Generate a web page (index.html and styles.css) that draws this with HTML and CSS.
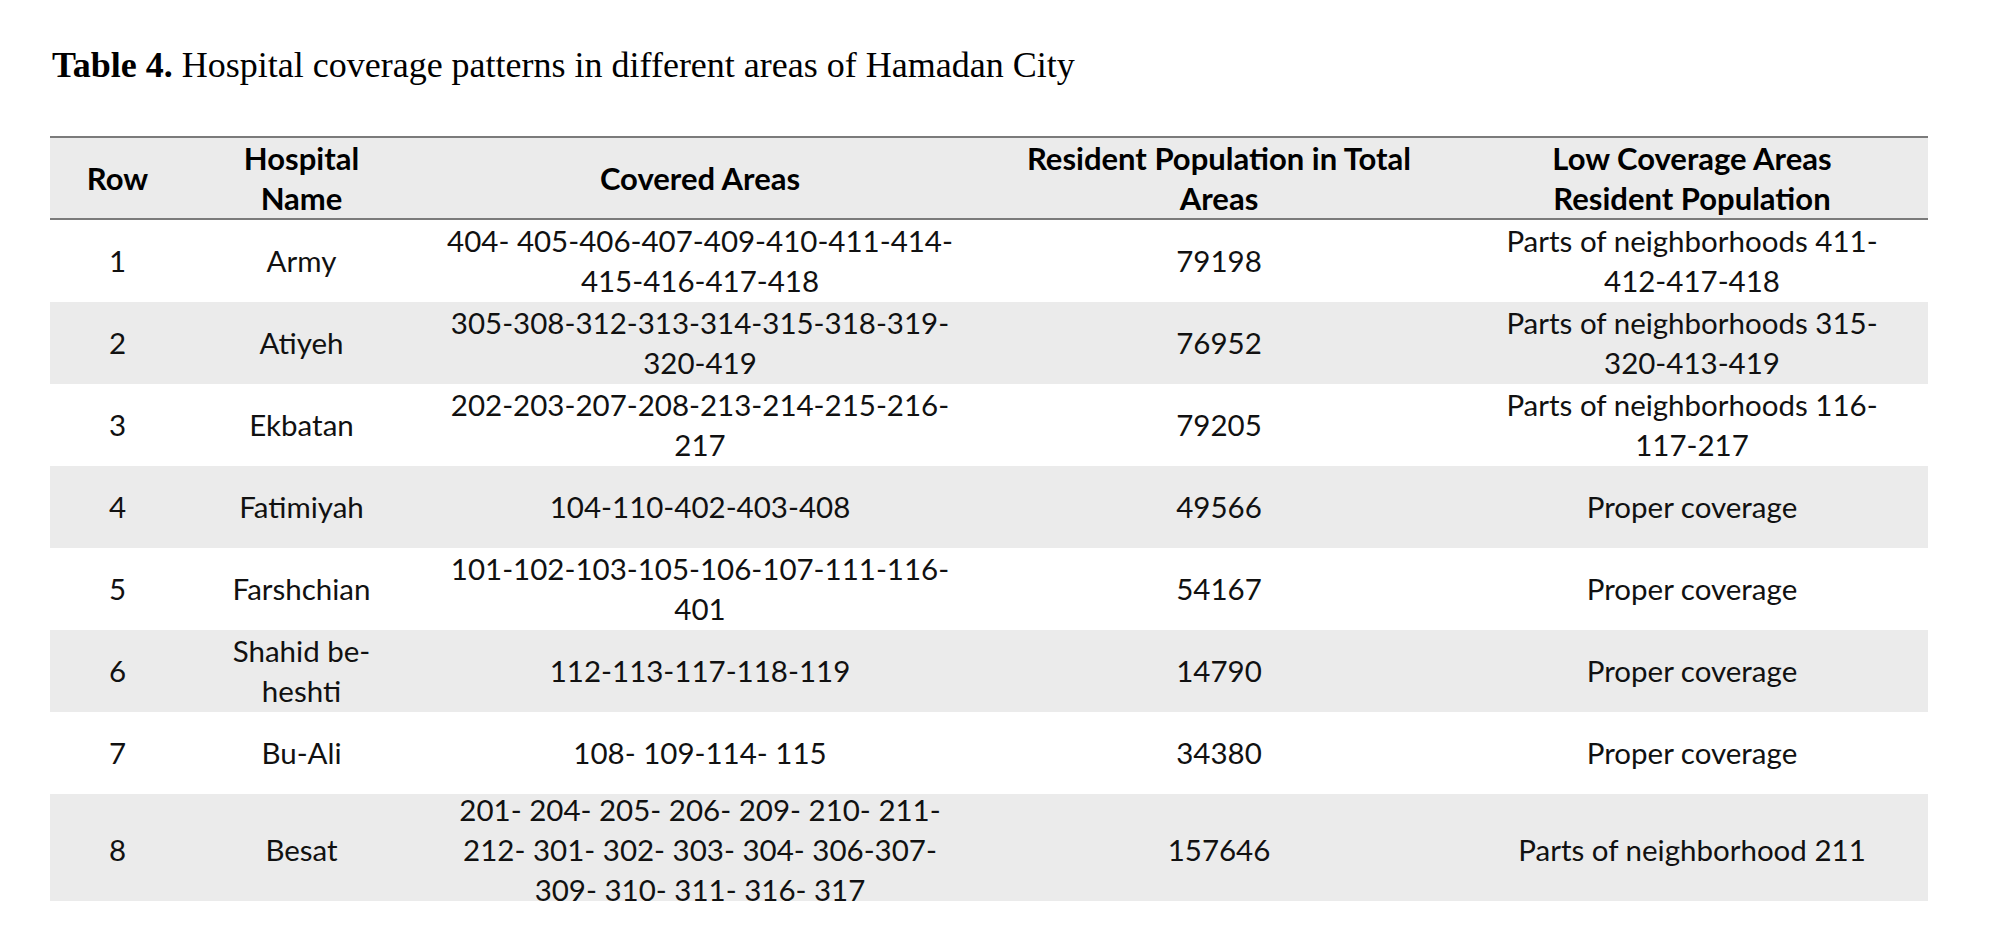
FILE: index.html
```html
<!DOCTYPE html>
<html lang="en">
<head>
<meta charset="utf-8">
<title>Table 4</title>
<link rel="stylesheet" href="styles.css">
</head>
<body>
<p class="caption"><b>Table 4.</b> Hospital coverage patterns in different areas of Hamadan City</p>
<div class="table">
  <div class="row head">
    <div class="cell">Row</div>
    <div class="cell">Hospital<br>Name</div>
    <div class="cell">Covered Areas</div>
    <div class="cell">Resident Population in Total<br>Areas</div>
    <div class="cell">Low Coverage Areas<br>Resident Population</div>
  </div>
  <div class="row">
    <div class="cell">1</div>
    <div class="cell">Army</div>
    <div class="cell">404- 405-406-407-409-410-411-414-<br>415-416-417-418</div>
    <div class="cell">79198</div>
    <div class="cell">Parts of neighborhoods 411-<br>412-417-418</div>
  </div>
  <div class="row alt">
    <div class="cell">2</div>
    <div class="cell">Atiyeh</div>
    <div class="cell">305-308-312-313-314-315-318-319-<br>320-419</div>
    <div class="cell">76952</div>
    <div class="cell">Parts of neighborhoods 315-<br>320-413-419</div>
  </div>
  <div class="row">
    <div class="cell">3</div>
    <div class="cell">Ekbatan</div>
    <div class="cell">202-203-207-208-213-214-215-216-<br>217</div>
    <div class="cell">79205</div>
    <div class="cell">Parts of neighborhoods 116-<br>117-217</div>
  </div>
  <div class="row alt">
    <div class="cell">4</div>
    <div class="cell">Fatimiyah</div>
    <div class="cell">104-110-402-403-408</div>
    <div class="cell">49566</div>
    <div class="cell">Proper coverage</div>
  </div>
  <div class="row">
    <div class="cell">5</div>
    <div class="cell">Farshchian</div>
    <div class="cell">101-102-103-105-106-107-111-116-<br>401</div>
    <div class="cell">54167</div>
    <div class="cell">Proper coverage</div>
  </div>
  <div class="row alt">
    <div class="cell">6</div>
    <div class="cell">Shahid be-<br>heshti</div>
    <div class="cell">112-113-117-118-119</div>
    <div class="cell">14790</div>
    <div class="cell">Proper coverage</div>
  </div>
  <div class="row">
    <div class="cell">7</div>
    <div class="cell">Bu-Ali</div>
    <div class="cell">108- 109-114- 115</div>
    <div class="cell">34380</div>
    <div class="cell">Proper coverage</div>
  </div>
  <div class="row alt last">
    <div class="cell">8</div>
    <div class="cell">Besat</div>
    <div class="cell">201- 204- 205- 206- 209- 210- 211-<br>212- 301- 302- 303- 304- 306-307-<br>309- 310- 311- 316- 317</div>
    <div class="cell">157646</div>
    <div class="cell">Parts of neighborhood 211</div>
  </div>
</div>
</body>
</html>
```
FILE: styles.css
```css
html, body {
  margin: 0;
  padding: 0;
  background: #ffffff;
}

body {
  color: #111111;
}

.caption {
  margin: 44px 0 0 52px;
  font-family: "Liberation Serif", "Times New Roman", serif;
  font-size: 36px;
  line-height: 42px;
  color: #000000;
}

.caption b {
  font-weight: bold;
}

.table {
  margin: 50px 0 0 50px;
  width: 1878px;
  font-family: Lato, "Open Sans", sans-serif;
  font-size: 29.5px;
  line-height: 40px;
}

.row {
  display: grid;
  grid-template-columns: 135px 233px 564px 474px 472px;
  grid-template-rows: 100%;
  height: 82px;
}

.row.alt {
  background: #ebebeb;
}

.row.head {
  box-sizing: border-box;
  height: 84px;
  background: #ebebeb;
  border-top: 2px solid #7b7b7b;
  border-bottom: 2px solid #7b7b7b;
  font-weight: bold;
  font-size: 31px;
  color: #000000;
}

.row.last {
  height: 107px;
}

.row.last .cell {
  padding-top: 5px;
}

.cell {
  display: flex;
  align-items: center;
  justify-content: center;
  min-height: 0;
  text-align: center;
  white-space: nowrap;
}
```
